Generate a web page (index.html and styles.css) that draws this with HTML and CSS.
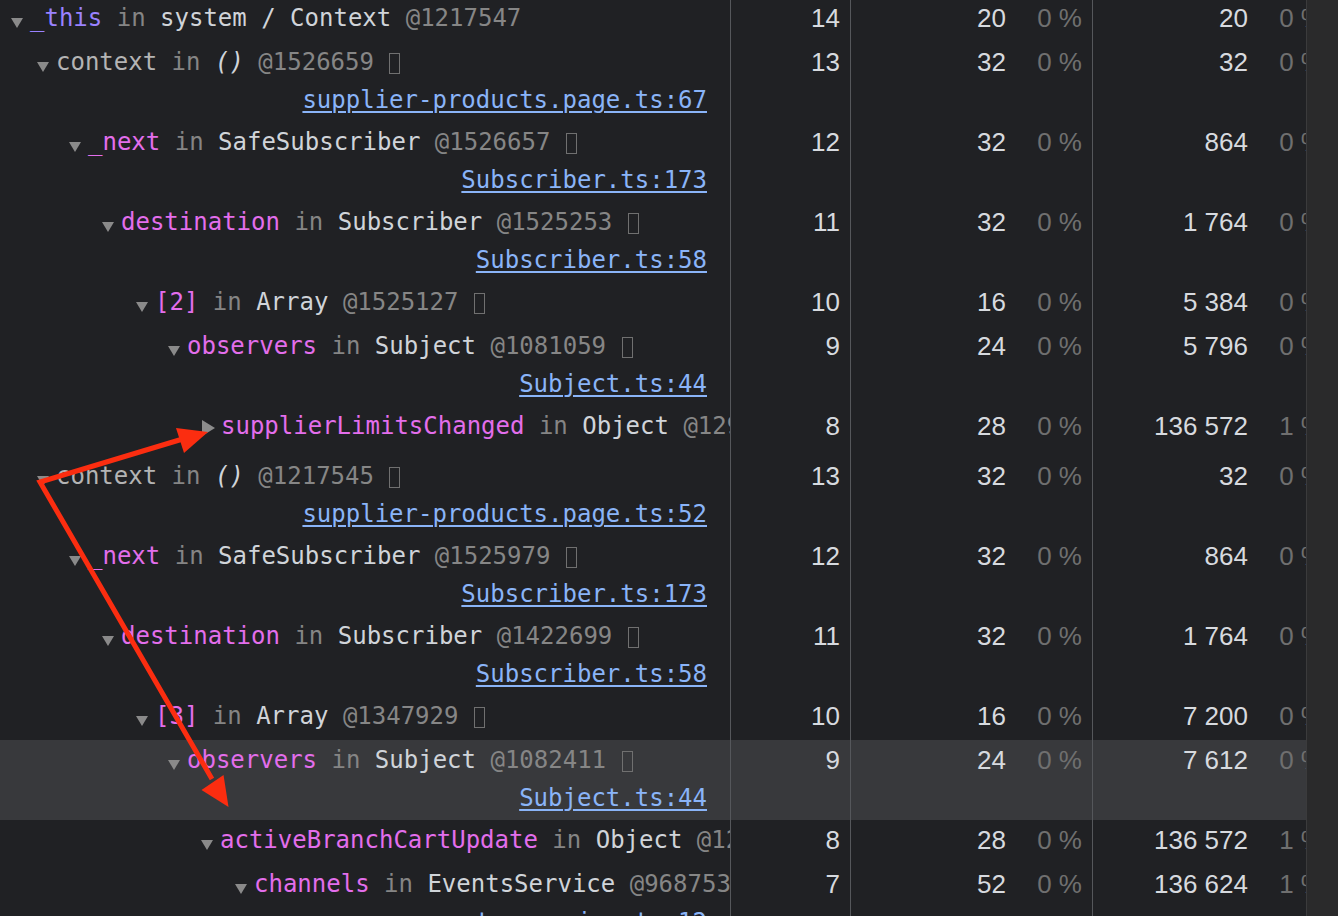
FILE: index.html
```html
<!DOCTYPE html>
<html>
<head>
<meta charset="utf-8">
<link rel="stylesheet" href="styles.css">
</head>
<body>
<div class="screen">
  <div class="table">
    <div class="row">
      <div class="name l0"><div class="line"><span class="tw"></span><span class="txt"><span class="this">_this</span> <span class="in">in</span> <span class="cls">system / Context</span> <span class="id">@1217547</span></span></div></div>
      <div class="c1">14</div>
      <div class="c2"><span>20</span><span class="pct">0&nbsp;%</span></div>
      <div class="c3"><span>20</span><span class="pct">0&nbsp;%</span></div>
    </div>
    <div class="row tall">
      <div class="name l1"><div class="line"><span class="tw"></span><span class="txt"><span class="plain">context</span> <span class="in">in</span> <span class="cls"><i>()</i></span> <span class="id">@1526659</span> <span class="box"></span></span></div><div class="src"><a>supplier-products.page.ts:67</a></div></div>
      <div class="c1">13</div>
      <div class="c2"><span>32</span><span class="pct">0&nbsp;%</span></div>
      <div class="c3"><span>32</span><span class="pct">0&nbsp;%</span></div>
    </div>
    <div class="row tall">
      <div class="name l2"><div class="line"><span class="tw"></span><span class="txt"><span class="prop">_next</span> <span class="in">in</span> <span class="cls">SafeSubscriber</span> <span class="id">@1526657</span> <span class="box"></span></span></div><div class="src"><a>Subscriber.ts:173</a></div></div>
      <div class="c1">12</div>
      <div class="c2"><span>32</span><span class="pct">0&nbsp;%</span></div>
      <div class="c3"><span>864</span><span class="pct">0&nbsp;%</span></div>
    </div>
    <div class="row tall">
      <div class="name l3"><div class="line"><span class="tw"></span><span class="txt"><span class="prop">destination</span> <span class="in">in</span> <span class="cls">Subscriber</span> <span class="id">@1525253</span> <span class="box"></span></span></div><div class="src"><a>Subscriber.ts:58</a></div></div>
      <div class="c1">11</div>
      <div class="c2"><span>32</span><span class="pct">0&nbsp;%</span></div>
      <div class="c3"><span>1&nbsp;764</span><span class="pct">0&nbsp;%</span></div>
    </div>
    <div class="row">
      <div class="name l4"><div class="line"><span class="tw"></span><span class="txt"><span class="prop">[2]</span> <span class="in">in</span> <span class="cls">Array</span> <span class="id">@1525127</span> <span class="box"></span></span></div></div>
      <div class="c1">10</div>
      <div class="c2"><span>16</span><span class="pct">0&nbsp;%</span></div>
      <div class="c3"><span>5&nbsp;384</span><span class="pct">0&nbsp;%</span></div>
    </div>
    <div class="row tall">
      <div class="name l5"><div class="line"><span class="tw"></span><span class="txt"><span class="prop">observers</span> <span class="in">in</span> <span class="cls">Subject</span> <span class="id">@1081059</span> <span class="box"></span></span></div><div class="src"><a>Subject.ts:44</a></div></div>
      <div class="c1">9</div>
      <div class="c2"><span>24</span><span class="pct">0&nbsp;%</span></div>
      <div class="c3"><span>5&nbsp;796</span><span class="pct">0&nbsp;%</span></div>
    </div>
    <div class="row mid">
      <div class="name l6"><div class="line"><span class="tw closed"></span><span class="txt"><span class="prop">supplierLimitsChanged</span> <span class="in">in</span> <span class="cls">Object</span> <span class="id">@1293017</span> <span class="box"></span></span></div></div>
      <div class="c1">8</div>
      <div class="c2"><span>28</span><span class="pct">0&nbsp;%</span></div>
      <div class="c3"><span>136&nbsp;572</span><span class="pct">1&nbsp;%</span></div>
    </div>
    <div class="row tall">
      <div class="name l1"><div class="line"><span class="tw"></span><span class="txt"><span class="plain">context</span> <span class="in">in</span> <span class="cls"><i>()</i></span> <span class="id">@1217545</span> <span class="box"></span></span></div><div class="src"><a>supplier-products.page.ts:52</a></div></div>
      <div class="c1">13</div>
      <div class="c2"><span>32</span><span class="pct">0&nbsp;%</span></div>
      <div class="c3"><span>32</span><span class="pct">0&nbsp;%</span></div>
    </div>
    <div class="row tall">
      <div class="name l2"><div class="line"><span class="tw"></span><span class="txt"><span class="prop">_next</span> <span class="in">in</span> <span class="cls">SafeSubscriber</span> <span class="id">@1525979</span> <span class="box"></span></span></div><div class="src"><a>Subscriber.ts:173</a></div></div>
      <div class="c1">12</div>
      <div class="c2"><span>32</span><span class="pct">0&nbsp;%</span></div>
      <div class="c3"><span>864</span><span class="pct">0&nbsp;%</span></div>
    </div>
    <div class="row tall">
      <div class="name l3"><div class="line"><span class="tw"></span><span class="txt"><span class="prop">destination</span> <span class="in">in</span> <span class="cls">Subscriber</span> <span class="id">@1422699</span> <span class="box"></span></span></div><div class="src"><a>Subscriber.ts:58</a></div></div>
      <div class="c1">11</div>
      <div class="c2"><span>32</span><span class="pct">0&nbsp;%</span></div>
      <div class="c3"><span>1&nbsp;764</span><span class="pct">0&nbsp;%</span></div>
    </div>
    <div class="row">
      <div class="name l4"><div class="line"><span class="tw"></span><span class="txt"><span class="prop">[3]</span> <span class="in">in</span> <span class="cls">Array</span> <span class="id">@1347929</span> <span class="box"></span></span></div></div>
      <div class="c1">10</div>
      <div class="c2"><span>16</span><span class="pct">0&nbsp;%</span></div>
      <div class="c3"><span>7&nbsp;200</span><span class="pct">0&nbsp;%</span></div>
    </div>
    <div class="row tall selected">
      <div class="name l5"><div class="line"><span class="tw"></span><span class="txt"><span class="prop">observers</span> <span class="in">in</span> <span class="cls">Subject</span> <span class="id">@1082411</span> <span class="box"></span></span></div><div class="src"><a>Subject.ts:44</a></div></div>
      <div class="c1">9</div>
      <div class="c2"><span>24</span><span class="pct">0&nbsp;%</span></div>
      <div class="c3"><span>7&nbsp;612</span><span class="pct">0&nbsp;%</span></div>
    </div>
    <div class="row">
      <div class="name l6"><div class="line"><span class="tw"></span><span class="txt"><span class="prop">activeBranchCartUpdate</span> <span class="in">in</span> <span class="cls">Object</span> <span class="id">@1293019</span> <span class="box"></span></span></div></div>
      <div class="c1">8</div>
      <div class="c2"><span>28</span><span class="pct">0&nbsp;%</span></div>
      <div class="c3"><span>136&nbsp;572</span><span class="pct">1&nbsp;%</span></div>
    </div>
    <div class="row tall">
      <div class="name l7"><div class="line"><span class="tw"></span><span class="txt"><span class="prop">channels</span> <span class="in">in</span> <span class="cls">EventsService</span> <span class="id">@968753</span> <span class="box"></span></span></div><div class="src"><a>events.service.ts:12</a></div></div>
      <div class="c1">7</div>
      <div class="c2"><span>52</span><span class="pct">0&nbsp;%</span></div>
      <div class="c3"><span>136&nbsp;624</span><span class="pct">1&nbsp;%</span></div>
    </div>
  </div>
  <div class="scrollbar"></div>
  <svg class="annot" width="1338" height="916" viewBox="0 0 1338 916">
    <polyline points="186,438 40,482 212,779" fill="none" stroke="#fb2d10" stroke-width="5" stroke-linejoin="miter" stroke-linecap="butt"/>
    <polygon points="176,428 208,432 184,453" fill="#fb2d10"/>
    <polygon points="201.5,790 223.5,775 228.5,807" fill="#fb2d10"/>
  </svg>
</div>
</body>
</html>
```

FILE: styles.css
```css
html, body {
  margin: 0;
  padding: 0;
  background: #202124;
  overflow: hidden;
}

.screen {
  position: relative;
  display: flex;
  width: 1338px;
  height: 916px;
  overflow: hidden;
  background: #202124;
}

.table {
  width: 1306px;
  flex: none;
  overflow: hidden;
  margin-top: -2px;
}

.scrollbar {
  flex: 1;
  background: #2a2a2b;
  border-left: 1px solid #3b3b3c;
}

.row {
  display: flex;
  height: 44px;
  width: 1335px;
}

.row.tall { height: 80px; }
.row.mid { height: 50px; }
.row.selected { background: #38393c; }

.name {
  width: 730px;
  flex: none;
  border-right: 1px solid #55575b;
  overflow: hidden;
  font-family: "DejaVu Sans Mono", monospace;
  font-size: 24px;
  white-space: pre;
}

.l0 { padding-left: 5px; width: 725px; }
.l1 { padding-left: 31px; width: 699px; }
.l2 { padding-left: 63px; width: 667px; }
.l3 { padding-left: 96px; width: 634px; }
.l4 { padding-left: 130px; width: 600px; }
.l5 { padding-left: 162px; width: 568px; }
.l6 { padding-left: 195px; width: 535px; }
.l7 { padding-left: 229px; width: 501px; }

.line {
  display: flex;
  align-items: flex-start;
  height: 40px;
}

.tw {
  flex: none;
  width: 0;
  height: 0;
  margin: 20px 7px 0 6px;
  border-left: 6.5px solid transparent;
  border-right: 6.5px solid transparent;
  border-top: 10px solid #8a8a8a;
}

.tw.closed {
  margin: 14px 6px 0 7px;
  border-top: 8.5px solid transparent;
  border-bottom: 8.5px solid transparent;
  border-left: 13px solid #8c8c8c;
  border-right: 0;
}

.txt {
  line-height: 40px;
  color: #cfd3d8;
}

.this { color: #9a82ff; }
.prop { color: #e36eec; }
.plain { color: #b4b4b4; }
.in { color: #858585; }
.cls { color: #d0d4d9; }
.cls i { font-style: italic; }
.id { color: #868686; }

.box {
  display: inline-block;
  width: 9px;
  height: 19px;
  border: 1.5px solid #707070;
  vertical-align: -4px;
  margin-left: 1px;
}

.src {
  height: 36px;
  line-height: 36px;
  text-align: right;
  padding-right: 23px;
}

.src a {
  color: #8ab4f8;
  text-decoration: underline;
  text-decoration-thickness: 2px;
  text-underline-offset: 3px;
}

.c1, .c2, .c3 {
  flex: none;
  display: flex;
  justify-content: flex-end;
  align-items: flex-start;
  height: 40px;
  line-height: 40px;
  font-family: "Liberation Sans", Arial, sans-serif;
  font-size: 26px;
  color: #d7dadf;
  white-space: nowrap;
}

.c1 {
  width: 109px;
  padding-right: 10px;
  border-right: 1px solid #55575b;
}

.c2 {
  width: 231px;
  padding-right: 10px;
  border-right: 1px solid #55575b;
}

.c3 {
  width: 231px;
  padding-right: 11px;
}

.row .c1, .row .c2 { height: auto; align-self: stretch; }
.row .c3 { height: auto; }

.pct {
  width: 76px;
  text-align: right;
  color: #6f6f6f;
}

.annot {
  position: absolute;
  left: 0;
  top: 0;
  pointer-events: none;
}
```
